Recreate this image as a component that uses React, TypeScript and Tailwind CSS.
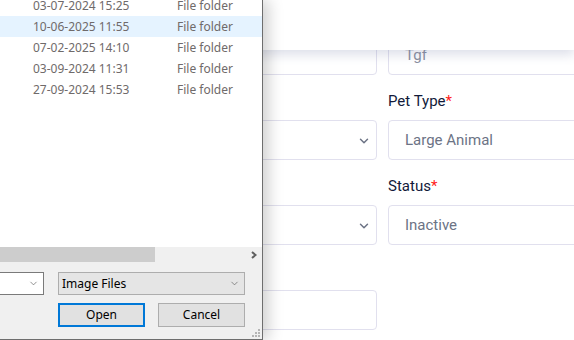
import {ChevronDown} from 'lucide-react'

const rows = [
    {date: '03-07-2024 15:25', type: 'File folder', selected: false},
    {date: '10-06-2025 11:55', type: 'File folder', selected: true},
    {date: '07-02-2025 14:10', type: 'File folder', selected: false},
    {date: '03-09-2024 11:31', type: 'File folder', selected: false},
    {date: '27-09-2024 15:53', type: 'File folder', selected: false},
]

const Field = ({label, value, placeholder, chevron}: {label?: string; value?: string; placeholder?: string; chevron?: boolean}) => {
    return (
        <div className="flex flex-col gap-[9px]">
            <p className="h-5 leading-5 text-[15px] text-[#121a3a]">
                {label}
                {label && <span className="text-[#ff1a1a]">*</span>}
            </p>
            <div className="relative h-[40px] rounded-[4px] border border-[#e1e0ee] bg-white flex items-center pl-[16px] text-[15px] text-[#6c7385]">
                {value}
                {placeholder && <span className="text-[#8a90a0]">{placeholder}</span>}
                {chevron && <ChevronDown className="absolute right-[5px] top-[13px] w-[14px] h-[14px] text-[#6c7385]" strokeWidth={2.5} />}
            </div>
        </div>
    )
}

const FileDialog = () => {
    return (
        <div className="absolute left-0 top-0 w-[263px] h-[340px] flex flex-col border-r border-b border-[#6e6e6e] bg-white shadow-[6px_0_14px_rgba(0,0,0,0.18)] font-['Segoe_UI','Noto_Sans',sans-serif] text-[12px]">
            <div className="flex-1 overflow-hidden">
                <div className="mt-[-5px]">
                    {rows.map((row) => (
                        <div key={row.date} className={`h-[21px] flex items-center text-[#6f6a6a] ${row.selected ? 'bg-[#e5f3ff]' : ''}`}>
                            <span className="ml-[33px] w-[144px]">{row.date}</span>
                            <span>{row.type}</span>
                        </div>
                    ))}
                </div>
            </div>
            <div className="h-[15px] bg-[#f0f0f0] flex items-center">
                <div className="w-[155px] h-full bg-[#cdcdcd]" />
                <div className="flex-1" />
                <svg width="8" height="8" viewBox="0 0 8 8" className="mr-[4px]">
                    <path d="M2 1 L5.5 4 L2 7" fill="none" stroke="#606060" strokeWidth="2" />
                </svg>
            </div>
            <div className="h-[77px] bg-[#f0f0f0] relative pt-[10px] flex flex-col gap-[8px]">
                <div className="flex gap-[14px]">
                    <div className="ml-[-20px] w-[64px] h-[23px] bg-white border border-[#7a7a7a] flex items-center justify-end pr-[4px]">
                        <ChevronDown className="w-[11px] h-[11px] text-[#606060]" strokeWidth={1.5} />
                    </div>
                    <div className="w-[187px] h-[23px] bg-[#e5e5e5] border border-[#adadad] flex items-center justify-between pl-[3px] pr-[4px] text-black">
                        <span>Image Files</span>
                        <ChevronDown className="w-[11px] h-[11px] text-[#606060]" strokeWidth={1.5} />
                    </div>
                </div>
                <div className="flex gap-[13px] pl-[58px]">
                    <button className="w-[87px] h-[24px] bg-[#e1e1e1] border-2 border-[#0078d7] text-black leading-none">Open</button>
                    <button className="w-[87px] h-[24px] bg-[#e1e1e1] border border-[#adadad] text-black leading-none">Cancel</button>
                </div>
                <svg width="10" height="10" viewBox="0 0 10 10" className="absolute right-[1px] bottom-[1px]">
                    <rect x="7" y="1" width="2" height="2" fill="#b5b5b5" />
                    <rect x="4" y="4" width="2" height="2" fill="#b5b5b5" />
                    <rect x="7" y="4" width="2" height="2" fill="#b5b5b5" />
                    <rect x="1" y="7" width="2" height="2" fill="#b5b5b5" />
                    <rect x="4" y="7" width="2" height="2" fill="#b5b5b5" />
                    <rect x="7" y="7" width="2" height="2" fill="#b5b5b5" />
                </svg>
            </div>
        </div>
    )
}

export default function App() {
    return (
        <div className="relative w-[574px] h-[340px] overflow-hidden bg-white font-['Roboto',sans-serif]">
            <div className="grid grid-cols-[317px_317px] gap-x-[11px] gap-y-[16px] pl-[60px] pt-[6px]">
                <Field />
                <Field placeholder="Tgf" />
                <Field chevron />
                <Field label="Pet Type" value="Large Animal" />
                <Field chevron />
                <Field label="Status" value="Inactive" />
                <Field />
            </div>
            <div className="absolute left-0 right-0 top-0 h-[50px] bg-white shadow-[0_5px_10px_rgba(90,100,150,0.2)]" />
            <FileDialog />
        </div>
    )
}
